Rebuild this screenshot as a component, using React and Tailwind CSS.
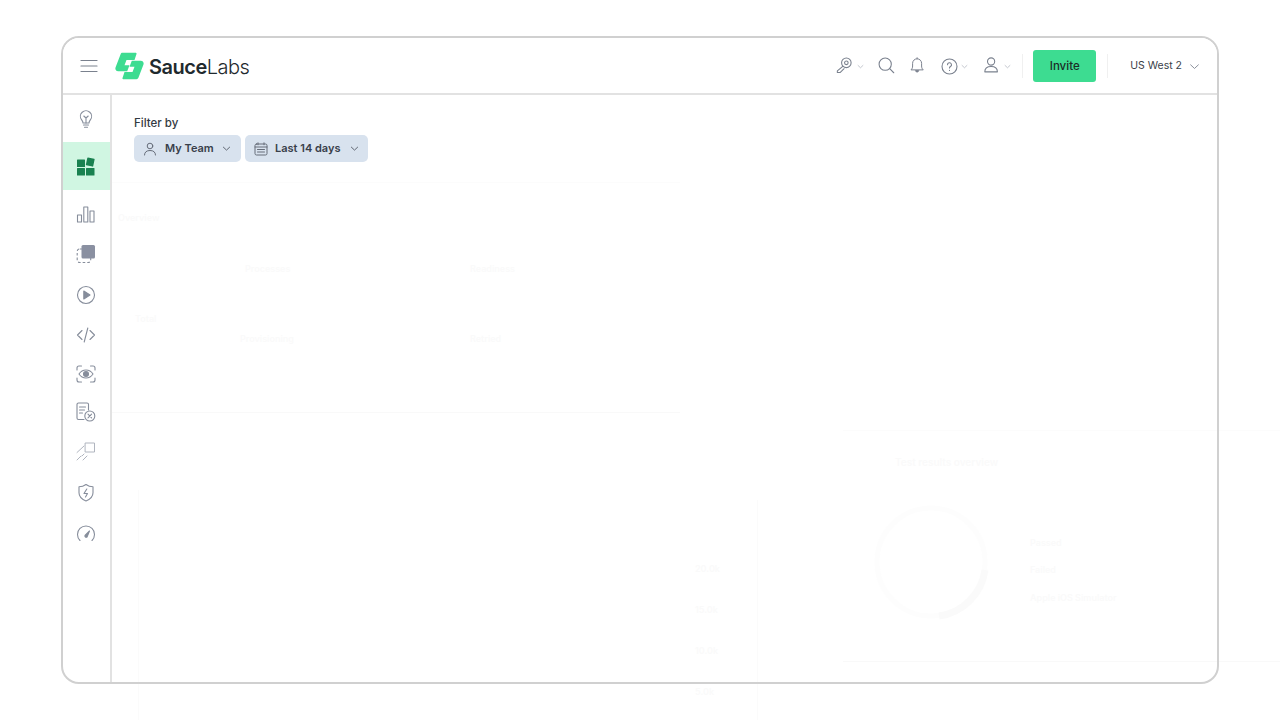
import React from "react";

const S = ({ w = 20, h = 20, vb = "0 0 20 20", c = "#868d9b", sw = 1.2, children }) => (
  <svg width={w} height={h} viewBox={vb} fill="none" stroke={c} strokeWidth={sw} strokeLinecap="round" strokeLinejoin="round" className="shrink-0">
    {children}
  </svg>
);

const Chevron = ({ w = 10, c = "#6b7280", sw = 1.1 }) => (
  <svg width={w} height={w} viewBox="0 0 10 10" fill="none" stroke={c} strokeWidth={sw} strokeLinecap="round" strokeLinejoin="round" className="shrink-0">
    <path d="M1.5 3.5 5 6.8l3.5-3.3" />
  </svg>
);

const Logo = () => (
  <svg width="29" height="28" viewBox="0 0 29 28" className="shrink-0">
    <path fill="#3ddc91" d="M7.500.8H20.500c.8 0 1.200.6 1 1.300L19.500 8H11.500l-2 5.200H14.500L12.200 19.200H3.200C1 19.200-.2 17.200.6 15.200L5.600 2.200C6 1.300 6.600.8 7.500.8Z" />
    <path fill="#3ddc91" d="M21.500 27.200H8.500c-.8 0-1.200-.6-1-1.300L9.500 20H17.500l2-5.200H14.500L16.800 8.800H25.800C28 8.800 29.200 10.800 28.400 12.800L23.400 25.800C23 26.700 22.400 27.200 21.500 27.200Z" />
  </svg>
);

const nav = [
  { h: 47, el: (
    <S w={20} h={20} c="#868d9b" sw={1.100}>
      <path d="M7 14c0-1.500-.6-2.200-1.400-3.200A5.600 5.600 0 1 1 14.400 10.800C13.600 11.800 13 12.500 13 14Z" />
      <path d="M7.500 16h5M8.500 18.300h3M10 14V9M7.800 7 10 9l2.200-2" />
    </S>
  ) },
  { h: 48, active: true, el: (
    <svg width="20" height="20" viewBox="0 0 20 20" className="shrink-0" fill="#198150">
      <rect x="1" y="3.500" width="8" height="7.500" rx=".6" />
      <rect x="1" y="12" width="8" height="7.500" rx=".6" />
      <rect x="10" y="12" width="8.500" height="7.500" rx=".6" />
      <rect x="10.500" y="2" width="7.500" height="8" rx=".6" transform="rotate(12 14 6)" />
    </svg>
  ) },
  { h: 48, el: (
    <S w={20} h={20} c="#868d9b" sw={1.100}>
      <rect x="1.500" y="11" width="4" height="7" />
      <rect x="7.800" y="3" width="4" height="15" />
      <rect x="14" y="7" width="4" height="11" />
    </S>
  ) },
  { h: 32, el: (
    <svg width="20" height="20" viewBox="0 0 20 20" fill="none" className="shrink-0">
      <rect x="1.200" y="5" width="13.500" height="13.500" rx="2.500" stroke="#868d9b" strokeWidth="1.100" strokeDasharray="2.600 2" />
      <rect x="5.500" y="1" width="13.500" height="13.500" rx="1.500" fill="#8a90a1" />
    </svg>
  ) },
  { h: 50, el: (
    <S w={20} h={20} c="#868d9b" sw={1.100}>
      <circle cx="10" cy="10" r="8.500" />
      <path d="M7.800 6 14 10l-6.200 4Z" fill="#868d9b" />
    </S>
  ) },
  { h: 30, el: (
    <S w={20} h={20} c="#868d9b" sw={1.100}>
      <path d="M6 5.500 1.500 10 6 14.500M14 5.500l4.500 4.500-4.500 4.500M11.800 3 8.200 17" />
    </S>
  ) },
  { h: 48, el: (
    <S w={20} h={20} c="#868d9b" sw={1.100}>
      <path d="M1 6V4a2 2 0 0 1 2-2h2.500M14.500 2H17a2 2 0 0 1 2 2v2M19 14v2a2 2 0 0 1-2 2h-2.500M5.500 18H3a2 2 0 0 1-2-2v-2" />
      <path d="M3 10c1.800-2.800 4.200-4 7-4s5.200 1.200 7 4c-1.800 2.800-4.200 4-7 4s-5.200-1.200-7-4Z" />
      <circle cx="10" cy="10" r="2.500" fill="#868d9b" />
    </S>
  ) },
  { h: 28, el: (
    <S w={20} h={20} c="#868d9b" sw={1.100}>
      <path d="M8 17.500H2.500A1.500 1.500 0 0 1 1 16V2.500A1.500 1.500 0 0 1 2.500 1H11a1.500 1.500 0 0 1 1.500 1.500V8" />
      <path d="M3.500 5h6M3.500 8h5M3.500 11h3" />
      <circle cx="13.800" cy="14" r="5" />
      <path d="m12 12.200 3.600 3.600M15.600 12.200 12 15.800" />
    </S>
  ) },
  { h: 52, el: (
    <S w={20} h={20} c="#b0b5bf" sw={1}>
      <rect x="9.500" y="1" width="9" height="9" />
      <path d="M1 10.500 8 4M1 18l4-4M7 18l4-4M8 12l-2 2" />
    </S>
  ) },
  { h: 30, el: (
    <S w={20} h={20} c="#868d9b" sw={1.100}>
      <path d="M10 1.500c2 1.500 4.500 2.300 7 2.300v6c0 4-3 6.600-7 8.200-4-1.600-7-4.200-7-8.200v-6c2.500 0 5-.8 7-2.300Z" />
      <path d="M10.800 6 8 10.500h3.500L9.500 14" />
    </S>
  ) },
  { h: 52, el: (
    <S w={20} h={20} c="#868d9b" sw={1.100}>
      <path d="M4 16.500a8.500 8.500 0 1 1 12 0" />
      <path d="M9 11.500 13.500 7l-2.500 6a1.300 1.300 0 0 1-2-1.500Z" fill="#868d9b" />
    </S>
  ) },
];

const Faded = () => (
  <div className="absolute inset-0 pointer-events-none overflow-hidden text-[9px] font-semibold text-[#fafafa]">
    <div className="absolute left-[112px] top-[182px] w-[568px] h-px bg-[#fcfcfc]" />
    <div className="absolute left-[112px] top-[412px] w-[568px] h-px bg-[#f9f9f9]" />
    <div className="absolute left-[843px] top-[430px] right-0 h-px bg-[#fcfcfc]" />
    <div className="absolute left-[138px] top-[490px] bottom-0 w-px bg-[#fbfbfb]" />
    <div className="absolute left-[757px] top-[500px] bottom-0 w-px bg-[#fbfbfb]" />
    <div className="absolute left-[843px] top-[661px] right-0 h-px bg-[#f9f9f9]" />
    <span className="absolute left-[118px] top-[211px]">Overview</span>
    <span className="absolute left-[245px] top-[262px]">Processes</span>
    <span className="absolute left-[470px] top-[262px]">Readiness</span>
    <span className="absolute left-[240px] top-[332px]">Provisioning</span>
    <span className="absolute left-[470px] top-[332px]">Retried</span>
    <span className="absolute left-[135px] top-[312px]">Total</span>
    <span className="absolute left-[695px] top-[562px]">20.0k</span>
    <span className="absolute left-[695px] top-[603px]">15.0k</span>
    <span className="absolute left-[695px] top-[644px]">10.0k</span>
    <span className="absolute left-[695px] top-[685px]">5.0k</span>
    <span className="absolute left-[895px] top-[455px] text-[10px]">Test results overview</span>
    <span className="absolute left-[1030px] top-[536px]">Passed</span>
    <span className="absolute left-[1030px] top-[563px]">Failed</span>
    <span className="absolute left-[1030px] top-[591px]">Apple iOS Simulator</span>
    <svg width="120" height="120" viewBox="0 0 120 120" fill="none" className="absolute left-[871px] top-[504px]">
      <circle cx="60" cy="58" r="54" stroke="#fdfdfd" strokeWidth="5" />
      <path d="M114 66a54 54 0 0 1-46 46" stroke="#fafafa" strokeWidth="7" />
    </svg>
  </div>
);

export default function App() {
  return (
    <div className="relative h-[720px] w-[1280px] overflow-hidden bg-white font-['Inter','Liberation_Sans',sans-serif]">
      <Faded />
      <div className="relative pt-[36px] pl-[61px]">
        <div className="flex h-[648px] w-[1158px] flex-col overflow-hidden rounded-[18px] border-2 border-[#d0d0d0]">
          <header className="flex h-[57px] shrink-0 items-center border-b-2 border-[#e2e2e2] bg-white">
            <div className="flex w-[52px] justify-center">
              <svg width="18" height="14" viewBox="0 0 18 14" fill="none" stroke="#7a818e" strokeWidth="1.200" strokeLinecap="round">
                <path d="M1 1.500h16M1 7h16M1 12.500h16" />
              </svg>
            </div>
            <Logo />
            <div className="ml-[5px] pt-[2px] text-[20px] leading-none tracking-[-0.5px] text-[#1f2a2e]">
              <span className="font-semibold">Sauce</span><span className="font-light">Labs</span>
            </div>
            <div className="ml-auto mt-[1px] flex items-center">
              <S w={18} h={18} c="#7a818e" sw={1.200}>
                <circle cx="11.500" cy="6.500" r="5.300" />
                <circle cx="11.500" cy="6.500" r="2" />
                <path d="M7.500 10.500 1.500 15.500v1.800H4.500L9 13" />
              </S>
              <span className="ml-[3px]"><Chevron w={7} c="#b4b8c0" /></span>
              <span className="ml-[14px]">
                <S w={18} h={18} c="#7a818e" sw={1.200}>
                  <circle cx="8" cy="8" r="6.800" />
                  <path d="m13 13 4.500 4.500" />
                </S>
              </span>
              <span className="ml-[13px]">
                <S w={18} h={18} c="#7a818e" sw={1.100}>
                  <path d="M2.500 14c1-1 1.500-2 1.500-4V7a5 5 0 0 1 10 0v3c0 2 .5 3 1.500 4Z" />
                  <path d="M9 .8V2" />
                  <path d="M7.300 15.500a1.800 1.800 0 0 0 3.400 0Z" fill="#7a818e" />
                </S>
              </span>
              <span className="ml-[14px]">
                <S w={17} h={17} vb="0 0 17 17" c="#7a818e" sw={1.100}>
                  <circle cx="8.500" cy="8.500" r="7.500" />
                  <path d="M6.500 6.800a2 2 0 1 1 3 1.700c-.7.400-1 .8-1 1.500" />
                  <path d="M8.500 12.200v.2" />
                </S>
              </span>
              <span className="ml-[3px]"><Chevron w={7} c="#b4b8c0" /></span>
              <span className="ml-[15px]">
                <S w={18} h={18} c="#7a818e" sw={1.200}>
                  <circle cx="9" cy="5" r="4" />
                  <path d="M2 16.500c0-3.500 2.500-6 7-6s7 2.500 7 6Z" />
                </S>
              </span>
              <span className="ml-[3px]"><Chevron w={7} c="#b4b8c0" /></span>
              <div className="ml-[11px] h-[24px] w-px bg-[#f0f0f0]" />
              <button className="ml-[10px] flex h-[32px] w-[63px] items-center justify-center rounded-[3px] bg-[#3ddc91] pt-[1px] text-[11.500px] font-medium text-[#1c2b26]">
                Invite
              </button>
              <div className="ml-[11px] h-[24px] w-px bg-[#f0f0f0]" />
              <div className="ml-[22px] text-[10.500px] text-[#3a4149]">US West 2</div>
              <span className="ml-[7px] mr-[17px]"><Chevron w={11} c="#8a909b" sw={0.900} /></span>
            </div>
          </header>
          <div className="flex min-h-0 flex-1">
            <nav className="w-[49px] shrink-0 border-r-2 border-[#e2e2e2]">
              {nav.map((n, i) => (
                <div key={i} style={{ height: n.h }} className={`flex items-center justify-center pr-px ${n.active ? "bg-[#d0f6e2]" : ""}`}>
                  {n.el}
                </div>
              ))}
            </nav>
            <main className="flex-1 pl-[22px] pt-[20px]">
              <div className="text-[11.500px] font-medium leading-[16px] text-[#333a42]">Filter by</div>
              <div className="mt-[4px] flex gap-[4px]">
                <button className="flex h-[27px] w-[107px] items-center rounded-[5px] bg-[#d8e2ee] pl-[9px] text-[11px] font-semibold text-[#39404a]">
                  <S w={14} h={14} vb="0 0 14 14" c="#666d79" sw={1}>
                    <circle cx="7" cy="4" r="2.800" />
                    <path d="M1.500 13c0-2.800 2-4.500 5.500-4.500s5.500 1.700 5.500 4.500" />
                  </S>
                  <span className="ml-[8px]">My Team</span>
                  <span className="ml-[8px]"><Chevron w={9} c="#5f6672" /></span>
                </button>
                <button className="flex h-[27px] w-[123px] items-center rounded-[5px] bg-[#d8e2ee] pl-[9px] text-[11px] font-semibold text-[#39404a]">
                  <S w={14} h={14} vb="0 0 14 14" c="#666d79" sw={1}>
                    <rect x="1" y="2" width="12" height="11" rx="1.500" />
                    <path d="M1 5h12M4 .8v2M10 .8v2M3.500 7.500h7M3.500 10h7" />
                  </S>
                  <span className="ml-[7px]">Last 14 days</span>
                  <span className="ml-[9px]"><Chevron w={9} c="#5f6672" /></span>
                </button>
              </div>
            </main>
          </div>
        </div>
      </div>
    </div>
  );
}
